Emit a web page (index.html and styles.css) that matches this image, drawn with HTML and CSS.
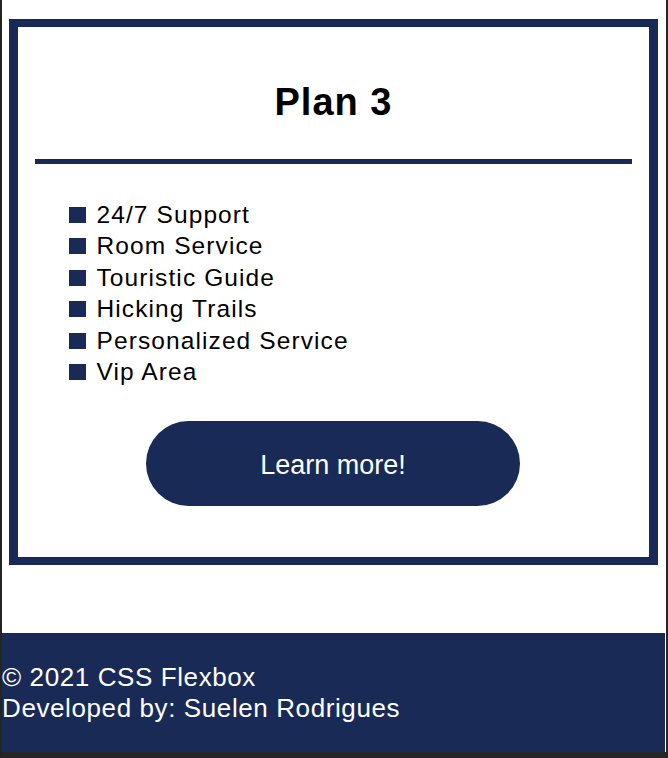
FILE: index.html
```html
<!DOCTYPE html>
<html lang="en">
<head>
<meta charset="utf-8">
<title>Plan 3</title>
<link rel="stylesheet" href="styles.css">
</head>
<body>
<div class="frame">
  <main class="main">
    <section class="card">
      <h2 class="card-title">Plan 3</h2>
      <div class="divider"></div>
      <ul class="features">
        <li class="feature"><span class="bullet"></span>24/7 Support</li>
        <li class="feature"><span class="bullet"></span>Room Service</li>
        <li class="feature"><span class="bullet"></span>Touristic Guide</li>
        <li class="feature"><span class="bullet"></span>Hicking Trails</li>
        <li class="feature"><span class="bullet"></span>Personalized Service</li>
        <li class="feature"><span class="bullet"></span>Vip Area</li>
      </ul>
      <div class="actions">
        <a class="btn" href="#">Learn more!</a>
      </div>
    </section>
  </main>
  <footer class="footer">
    <p class="footer-line">© 2021 CSS Flexbox</p>
    <p class="footer-line">Developed by: Suelen Rodrigues</p>
  </footer>
</div>
</body>
</html>
```

FILE: styles.css
```css
* { box-sizing: border-box; }

html, body {
  margin: 0;
  padding: 0;
  background: #ffffff;
}

body {
  font-family: "Liberation Sans", Arial, Helvetica, sans-serif;
  color: #000;
}

.frame {
  height: 758px;
  display: flex;
  flex-direction: column;
  border-left: 2px solid #232323;
  border-right: 2px solid #262626;
  border-bottom: 6px solid #262626;
}

.main {
  flex: 1;
  padding: 19px 8px 0 7px;
}

.card {
  display: flex;
  flex-direction: column;
  height: 546px;
  border-style: solid;
  border-color: #1a2a57;
  border-width: 8px 9px;
  padding: 53px 0 0 0;
}

.card-title {
  margin: 0;
  font-size: 38px;
  line-height: 44px;
  font-weight: 700;
  letter-spacing: 1px;
  text-align: center;
}

.divider {
  height: 5px;
  margin: 35px 17px 0 17px;
  background: #1a2a57;
}

.features {
  list-style: none;
  margin: 35px 0 0 0;
  padding: 0 0 0 51px;
  font-size: 24.5px;
  line-height: 31.4px;
  letter-spacing: 1.1px;
}

.feature {
  display: flex;
  align-items: baseline;
}

.bullet {
  display: inline-block;
  width: 16.5px;
  height: 16px;
  margin-right: 11px;
  background: #1a2a57;
  flex: none;
}

.actions {
  display: flex;
  justify-content: center;
  margin-top: 34px;
  padding-right: 1px;
}

.btn {
  display: flex;
  align-items: center;
  justify-content: center;
  width: 374px;
  height: 85px;
  padding-top: 3px;
  border-radius: 43px;
  background: #1a2a57;
  color: #ffffff;
  font-size: 27px;
  text-decoration: none;
}

.footer {
  background: #1a2a57;
  color: #ffffff;
  margin-right: 1px;
  padding: 29px 0 27px 0;
  font-size: 26px;
  line-height: 31.7px;
  letter-spacing: 0.6px;
}

.footer-line {
  margin: 0;
}
```
